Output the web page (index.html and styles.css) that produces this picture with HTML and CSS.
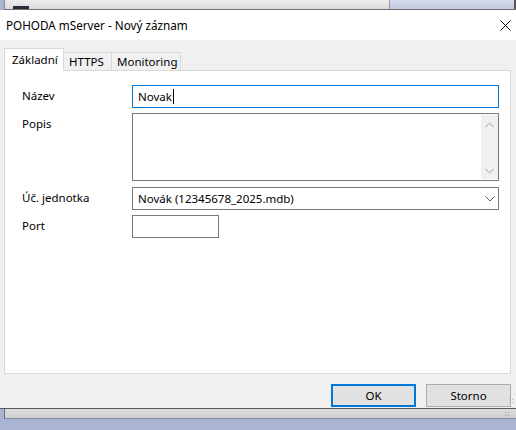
FILE: index.html
```html
<!DOCTYPE html>
<html lang="cs">
<head>
    <meta charset="UTF-8">
    <meta name="viewport" content="width=device-width, initial-scale=1.0">
    <title>POHODA mServer - Nový záznam</title>
    <link rel="stylesheet" href="styles.css">
</head>
<body>
    <div class="bg-top">
        <span class="bg-top-tab"></span>
        <span class="bg-top-right"></span>
    </div>

    <div class="dialog">
        <div class="title-bar">
            <span class="title">POHODA mServer - Nový záznam</span>
            <svg class="close" width="11" height="11" viewBox="0 0 11 11">
                <path d="M0.5 0.5 L10.5 10.5 M10.5 0.5 L0.5 10.5" stroke="#000" stroke-width="1" fill="none"/>
            </svg>
        </div>

        <div class="dialog-body">
            <div class="tabs">
                <div class="tab active">Základní</div>
                <div class="tab tab-https">HTTPS</div>
                <div class="tab tab-mon">Monitoring</div>
            </div>

            <div class="panel">
                <div class="form-row row-name">
                    <label>Název</label>
                    <div class="field focused">Novak<span class="caret"></span></div>
                </div>
                <div class="form-row row-desc">
                    <label>Popis</label>
                    <div class="field memo">
                        <div class="scrollbar">
                            <svg width="9" height="6" viewBox="0 0 9 6"><path d="M0.5 5 L4.5 1 L8.5 5" stroke="#c2c2c2" stroke-width="1.2" fill="none"/></svg>
                            <svg width="9" height="6" viewBox="0 0 9 6"><path d="M0.5 1 L4.5 5 L8.5 1" stroke="#c2c2c2" stroke-width="1.2" fill="none"/></svg>
                        </div>
                    </div>
                </div>
                <div class="form-row row-unit">
                    <label>Úč. jednotka</label>
                    <div class="field combo">
                        <span>Novák (12345678_2025.mdb)</span>
                        <svg width="10" height="6" viewBox="0 0 10 6"><path d="M0.5 0.5 L5 5 L9.5 0.5" stroke="#606060" stroke-width="1" fill="none"/></svg>
                    </div>
                </div>
                <div class="form-row row-port">
                    <label>Port</label>
                    <div class="field port"></div>
                </div>
            </div>

            <div class="buttons">
                <button class="btn default">OK</button>
                <button class="btn">Storno</button>
            </div>
            <span class="grip"></span>
        </div>
    </div>

    <div class="bg-bottom">
        <span class="grip grip-bg"></span>
    </div>
</body>
</html>
```

FILE: styles.css
```css
body {
    margin: 0;
    width: 516px;
    height: 430px;
    overflow: hidden;
    font-family: "Noto Sans", "Open Sans", sans-serif;
    font-size: 11.5px;
    color: #000;
    background: #a9b5d3;
}
.bg-top {
    position: relative;
    height: 9px;
    margin-left: 4px;
    border-left: 1px solid #8c8c8c;
    border-bottom: 1px solid #6f6f6f;
    background: linear-gradient(#eeeeee, #dadada);
}
.bg-top-tab {
    position: absolute;
    left: 8px;
    bottom: 0;
    width: 16px;
    height: 3px;
    background: #2b2b3a;
}
.bg-top-right {
    position: absolute;
    left: 384px;
    top: 0;
    bottom: 0;
    right: 0;
    border-left: 1px solid #9a9a9a;
    border-right: 2px solid #555;
    background: linear-gradient(#d7dcec, #c3c9df);
}
.dialog {
    background: #f0f0f0;
    border-bottom: 1px solid #5a5a5a;
}
.title-bar {
    height: 30px;
    background: #fff;
    display: flex;
    align-items: center;
    justify-content: space-between;
    padding: 0 5px 0 6px;
    font-size: 11.7px;
}
.close {
    display: block;
}
.dialog-body {
    position: relative;
    padding: 8px 5px 0 4px;
    height: 368px;
    box-sizing: border-box;
}
.tabs {
    display: flex;
    align-items: flex-end;
    height: 22px;
}
.tab {
    height: 18px;
    line-height: 17px;
    padding: 0 0 0 5px;
    border: 1px solid #d9d9d9;
    border-bottom: none;
    margin-left: -1px;
    box-sizing: border-box;
}
.tab.active {
    width: 60px;
    height: 23px;
    margin: 0 0 -1px 0;
    padding-left: 7px;
    line-height: 22px;
    background: #fff;
    position: relative;
    z-index: 1;
}
.tab-https {
    width: 49px;
}
.tab-mon {
    width: 70px;
}
.panel {
    height: 304px;
    box-sizing: border-box;
    border: 1px solid #d9d9d9;
    background: #fff;
    padding: 14px 11px 0 17px;
}
.form-row {
    display: flex;
    align-items: flex-start;
}
.form-row label {
    width: 110px;
    padding-top: 3px;
    line-height: 16px;
}
.row-desc { margin-top: 5px; }
.row-unit { margin-top: 6px; }
.row-port { margin-top: 5px; }
.field {
    flex: 1;
    height: 23px;
    box-sizing: border-box;
    border: 1px solid #7a7a7a;
    padding: 0 5px;
    line-height: 20px;
    display: flex;
    align-items: center;
}
.field.focused {
    border-color: #0078d7;
}
.caret {
    display: inline-block;
    width: 1px;
    height: 15px;
    background: #000;
    margin-left: 1px;
}
.field.memo {
    height: 68px;
    padding: 0;
    justify-content: flex-end;
    align-items: stretch;
}
.scrollbar {
    width: 17px;
    margin: 1px 0;
    background: #f0f0f0;
    display: flex;
    flex-direction: column;
    justify-content: space-between;
    align-items: center;
    padding: 7px 0 5px;
}
.scrollbar svg {
    display: block;
}
.field.combo {
    height: 23px;
    justify-content: space-between;
    padding-right: 3px;
}
.field.port {
    flex: none;
    width: 87px;
}
.buttons {
    display: flex;
    justify-content: flex-end;
    gap: 10px;
    margin-top: 10px;
}
.btn {
    width: 85px;
    height: 23px;
    border: 1px solid #adadad;
    background: #e1e1e1;
    font: inherit;
    color: #000;
    padding: 0;
}
.btn.default {
    border: 2px solid #0078d7;
}
.grip {
    position: absolute;
    right: 2px;
    bottom: 4px;
    width: 6px;
    height: 6px;
    background:
        radial-gradient(circle, #b4b4b4 0.8px, transparent 1px) 0 0 / 3px 3px;
}
.bg-bottom {
    position: relative;
    height: 9px;
    margin-left: 4px;
    border-left: 1px solid #6e6e6e;
    border-bottom: 1px solid #8088a8;
    background: linear-gradient(#dcdcdc, #cfcfcf);
}
.grip.grip-bg {
    right: 6px;
    bottom: 1px;
    background:
        radial-gradient(circle, #a0a0a0 0.8px, transparent 1px) 0 0 / 3px 3px;
}
```
